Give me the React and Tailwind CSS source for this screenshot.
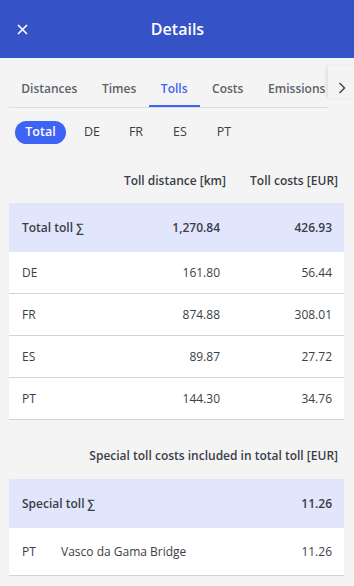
const tabs = ['Distances', 'Times', 'Tolls', 'Costs', 'Emissions']
const countries = ['Total', 'DE', 'FR', 'ES', 'PT']

const rows = [
  { c: 'DE', km: '161.80', eur: '56.44' },
  { c: 'FR', km: '874.88', eur: '308.01' },
  { c: 'ES', km: '89.87', eur: '27.72' },
  { c: 'PT', km: '144.30', eur: '34.76' },
]

const App = () => {
  return (
    <div
      className="w-[354px] h-[586px] bg-[#f4f4f4] overflow-hidden text-[#3b3e45]"
      style={{ fontFamily: '"Open Sans", "Noto Sans", sans-serif' }}
    >
      {/* Header */}
      <div className="h-[58px] bg-[#3552c6] flex items-center relative">
        <button className="absolute left-[14px] top-[21px] w-[16px] h-[16px] flex items-center justify-center">
          <svg width="11" height="11" viewBox="0 0 11 11">
            <path d="M1 1 L10 10 M10 1 L1 10" stroke="white" strokeWidth="1.6" />
          </svg>
        </button>
        <h1 className="w-full text-center text-white font-semibold text-[16px] pl-[1px]">Details</h1>
      </div>

      {/* Tabs */}
      <div className="flex mt-[21px]">
        <div className="flex ml-[9px] w-[319px] border-b border-[#dcdcdc] overflow-hidden">
          {tabs.map((t) => (
            <div
              key={t}
              className={`px-[12.3px] h-[28px] flex items-start text-[12px] font-semibold whitespace-nowrap ${
                t === 'Tolls'
                  ? 'text-[#3e64f5] border-b-2 border-[#3e64f5] -mb-[1px]'
                  : 'text-[#5d6168]'
              }`}
            >
              <span className="leading-[18px] mt-[1px]">{t}</span>
            </div>
          ))}
        </div>
        <div className="w-[26px] h-[32px] -mt-[13px] pt-[13px] flex items-start justify-center shadow-[-2px_0_3px_rgba(0,0,0,0.08)] bg-[#f4f4f4]">
          <svg width="8" height="12" viewBox="0 0 8 12" className="mt-[3px] ml-[2px]">
            <path d="M1.5 1 L6.5 6 L1.5 11" stroke="#3b3e45" strokeWidth="1.4" fill="none" />
          </svg>
        </div>
      </div>

      {/* Country pills */}
      <div className="flex items-center ml-[15px] mt-[13px] h-[23px]">
        {countries.map((c) => (
          <div
            key={c}
            className={`h-[23px] flex items-center justify-center text-[12.5px] ${
              c === 'Total'
                ? 'w-[51px] rounded-full bg-[#3e64f5] text-white font-semibold mr-[4px]'
                : 'w-[44px] text-[#3b3e45]'
            }`}
          >
            {c}
          </div>
        ))}
      </div>

      {/* Toll table */}
      <div className="ml-[9px] mr-[10px] mt-[22px]">
        <div className="flex h-[37px] items-start pt-[6px] text-[12px] font-semibold">
          <div className="flex-1" />
          <div className="w-[130px] text-right pr-[6px]">Toll distance [km]</div>
          <div className="w-[112px] text-right pr-[6px]">Toll costs [EUR]</div>
        </div>
        <div className="flex items-center h-[49px] bg-[#e1e6fc] text-[12px] font-semibold">
          <div className="flex-1 pl-[13px]">Total toll ∑</div>
          <div className="w-[130px] text-right pr-[12px]">1,270.84</div>
          <div className="w-[112px] text-right pr-[12px]">426.93</div>
        </div>
        {rows.map((r) => (
          <div
            key={r.c}
            className="flex items-center h-[42px] bg-white border-b border-[#d4d4d4] text-[12px]"
          >
            <div className="flex-1 pl-[13px]">{r.c}</div>
            <div className="w-[130px] text-right pr-[12px]">{r.km}</div>
            <div className="w-[112px] text-right pr-[12px]">{r.eur}</div>
          </div>
        ))}
      </div>

      {/* Special tolls */}
      <div className="ml-[9px] mr-[10px] mt-[27px]">
        <div className="h-[32px] text-right pr-[6px] text-[12px] font-semibold">
          Special toll costs included in total toll [EUR]
        </div>
        <div className="flex items-center h-[49px] bg-[#e1e6fc] text-[12px] font-semibold">
          <div className="flex-1 pl-[13px]">Special toll ∑</div>
          <div className="text-right pr-[12px]">11.26</div>
        </div>
        <div className="flex items-center h-[48px] bg-white border-b border-[#d4d4d4] text-[12px]">
          <div className="w-[52px] pl-[13px]">PT</div>
          <div className="flex-1">Vasco da Gama Bridge</div>
          <div className="text-right pr-[12px]">11.26</div>
        </div>
      </div>
    </div>
  )
}

export default App
